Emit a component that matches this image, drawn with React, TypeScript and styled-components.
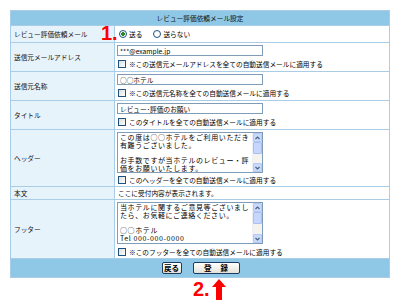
import React from "react";
import styled, { createGlobalStyle } from "styled-components";

const GlobalStyle = createGlobalStyle`
  html, body { margin: 0; padding: 0; background: #fff; }
  body { font-family: "Noto Sans CJK JP", "Noto Sans", sans-serif; color: #000; }
`;

const Page = styled.div`
  position: relative;
  width: 380px;
  padding: 10px 10px 0 10px;
`;

const Table = styled.div`
  display: grid;
  grid-template-columns: 103px 274px;
  gap: 1px;
  padding: 1px;
  background: #a9cde6;
`;

const Header = styled.div`
  grid-column: 1 / -1;
  height: 14px;
  background: #8ec8e6;
  display: flex;
  align-items: center;
  justify-content: center;
  font-size: 6.7px;
  color: #111;
`;

const Label = styled.div<{ $h: number }>`
  height: ${(p) => p.$h}px;
  background: #e7f3fb;
  display: flex;
  align-items: center;
  padding-left: 3px;
  font-size: 6.7px;
  color: #111;
`;

const Value = styled.div<{ $center?: boolean }>`
  background: #fff;
  padding: ${(p) => (p.$center ? "0 3px" : "2px 2px 0 2px")};
  display: flex;
  flex-direction: column;
  justify-content: ${(p) => (p.$center ? "center" : "flex-start")};
  gap: 3px;
  font-size: 6.7px;
  color: #000;
`;

const TextInput = styled.input`
  box-sizing: border-box;
  width: 146px;
  height: 11px;
  border: 1px solid #7f9db9;
  padding: 0 2px;
  margin: 0;
  font-family: inherit;
  font-size: 6.7px;
  color: #000;
  outline: none;
  background: #fff;
`;

const CheckRow = styled.label<{ $tight?: boolean }>`
  display: flex;
  align-items: center;
  gap: 3px;
  height: 9px;
  padding-left: 1px;
  margin-top: ${(p) => (p.$tight ? "-1px" : "0")};
  white-space: nowrap;
`;

const Check = styled.input.attrs({ type: "checkbox" })`
  appearance: none;
  box-sizing: border-box;
  width: 8px;
  height: 8px;
  margin: 0;
  border: 1px solid #1c5180;
  background: linear-gradient(135deg, #dcdcd7, #fff);
`;

const RadioGroup = styled.div`
  display: flex;
  align-items: center;
  gap: 11px;
  padding-left: 1px;
`;

const RadioLabel = styled.label`
  display: flex;
  align-items: center;
  gap: 2px;
`;

const Radio = styled.input.attrs({ type: "radio" })`
  appearance: none;
  box-sizing: border-box;
  width: 8px;
  height: 8px;
  margin: 0;
  border-radius: 50%;
  border: 1px solid #1c5180;
  background: #fff;
  &:checked {
    background: radial-gradient(circle, #2a8a2a 0 1.6px, #fff 2.2px);
  }
`;

const AreaBox = styled.div<{ $h: number }>`
  box-sizing: border-box;
  width: 146px;
  height: ${(p) => p.$h}px;
  border: 1px solid #7f9db9;
  display: flex;
  background: #fff;
`;

const Area = styled.textarea`
  flex: 1;
  min-width: 0;
  border: none;
  resize: none;
  margin: 0;
  padding: 1px 1px 0 2px;
  font-family: "Noto Sans CJK JP", sans-serif;
  font-size: 7px;
  line-height: 7.7px;
  letter-spacing: 0.6px;
  overflow: hidden;
  white-space: pre;
  color: #000;
  outline: none;
`;

const ScrollBar = styled.div`
  width: 9px;
  display: flex;
  flex-direction: column;
  background: #f4f3ee;
  border-left: 1px solid #eef0f6;
`;

const ScrollBtn = styled.div`
  box-sizing: border-box;
  height: 9px;
  background: #c9d9fb;
  border: 1px solid #b6c9f3;
  border-radius: 1px;
  display: flex;
  align-items: center;
  justify-content: center;
`;

const Thumb = styled.div`
  box-sizing: border-box;
  height: 12px;
  background: #c6d6fc;
  border: 1px solid #a9bff0;
  border-radius: 1px;
`;

const Track = styled.div`
  flex: 1;
`;

const Bar = styled.div`
  grid-column: 1 / -1;
  height: 18px;
  background: #8ec8e6;
  display: flex;
  align-items: center;
  justify-content: center;
  gap: 11px;
  padding-left: 1px;
`;

const Button = styled.button<{ $w: number }>`
  box-sizing: border-box;
  width: ${(p) => p.$w}px;
  height: 12px;
  padding: 0;
  margin: 0;
  border: 1px solid #1d3b63;
  border-radius: 2px;
  background: linear-gradient(#ffffff, #e4e2d8);
  font-family: "Noto Sans CJK JP", sans-serif;
  font-weight: bold;
  font-size: 7.5px;
  line-height: 10px;
  color: #000;
  white-space: pre;
`;

const Annot = styled.div`
  display: flex;
  align-items: flex-start;
  gap: 2px;
  padding-left: 183px;
  padding-top: 1px;
`;

const RedNum = styled.span`
  font-family: "Liberation Sans", Arial, sans-serif;
  font-weight: bold;
  font-size: 20px;
  line-height: 20px;
  color: #f00;
`;

const Marker = styled(RedNum)`
  position: absolute;
  left: 101px;
  top: 23px;
`;

const Arrow = styled.svg`
  display: block;
`;

const Chevron = ({ up }: { up?: boolean }) => (
  <svg width="5" height="4" viewBox="0 0 5 4">
    <polyline
      points={up ? "0.5,3 2.5,1 4.5,3" : "0.5,1 2.5,3 4.5,1"}
      fill="none"
      stroke="#4d6185"
      strokeWidth="1.2"
    />
  </svg>
);

const FakeScroll = () => (
  <ScrollBar>
    <ScrollBtn>
      <Chevron up />
    </ScrollBtn>
    <Thumb />
    <Track />
    <ScrollBtn>
      <Chevron />
    </ScrollBtn>
  </ScrollBar>
);

const headerText =
  "この度は○○ホテルをご利用いただき\n有難うございました。\n\nお手数ですが当ホテルのレビュー・評\n価をお願いいたします。\n今後の参考にさせていただきます。";
const footerText =
  "当ホテルに関するご意見等ございまし\nたら、お気軽にご連絡ください。\n\n○○ホテル\nTel 000-000-0000";

export default function App() {
  return (
    <>
      <GlobalStyle />
      <Page>
        <Table>
          <Header>レビュー評価依頼メール設定</Header>

          <Label $h={16}>レビュー評価依頼メール</Label>
          <Value $center>
            <RadioGroup>
              <RadioLabel>
                <Radio name="send" defaultChecked />
                送る
              </RadioLabel>
              <RadioLabel>
                <Radio name="send" />
                送らない
              </RadioLabel>
            </RadioGroup>
          </Value>

          <Label $h={28}>送信元メールアドレス</Label>
          <Value>
            <TextInput defaultValue="***@example.jp" />
            <CheckRow>
              <Check />
              ※この送信元メールアドレスを全ての自動送信メールに適用する
            </CheckRow>
          </Value>

          <Label $h={28}>送信元名称</Label>
          <Value>
            <TextInput defaultValue="○○ホテル" />
            <CheckRow>
              <Check />
              ※この送信元名称を全ての自動送信メールに適用する
            </CheckRow>
          </Value>

          <Label $h={28}>タイトル</Label>
          <Value>
            <TextInput defaultValue="レビュー･評価のお願い" />
            <CheckRow>
              <Check />
              このタイトルを全ての自動送信メールに適用する
            </CheckRow>
          </Value>

          <Label $h={56}>ヘッダー</Label>
          <Value>
            <AreaBox $h={41}>
              <Area wrap="off" defaultValue={headerText} />
              <FakeScroll />
            </AreaBox>
            <CheckRow $tight>
              <Check />
              このヘッダーを全ての自動送信メールに適用する
            </CheckRow>
          </Value>

          <Label $h={12}>本文</Label>
          <Value $center>ここに受付内容が表示されます。</Value>

          <Label $h={58}>フッター</Label>
          <Value>
            <AreaBox $h={42}>
              <Area wrap="off" defaultValue={footerText} />
              <FakeScroll />
            </AreaBox>
            <CheckRow>
              <Check />
              ※このフッターを全ての自動送信メールに適用する
            </CheckRow>
          </Value>

          <Bar>
            <Button $w={20}>戻る</Button>
            <Button $w={47}>{"登　 録"}</Button>
          </Bar>
        </Table>
        <Marker>1.</Marker>
        <Annot>
          <RedNum>2.</RedNum>
          <Arrow width="14" height="21" viewBox="0 0 14 21">
            <polygon points="7,0 14,8 10,8 10,21 4,21 4,8 0,8" fill="#f00" />
          </Arrow>
        </Annot>
      </Page>
    </>
  );
}
